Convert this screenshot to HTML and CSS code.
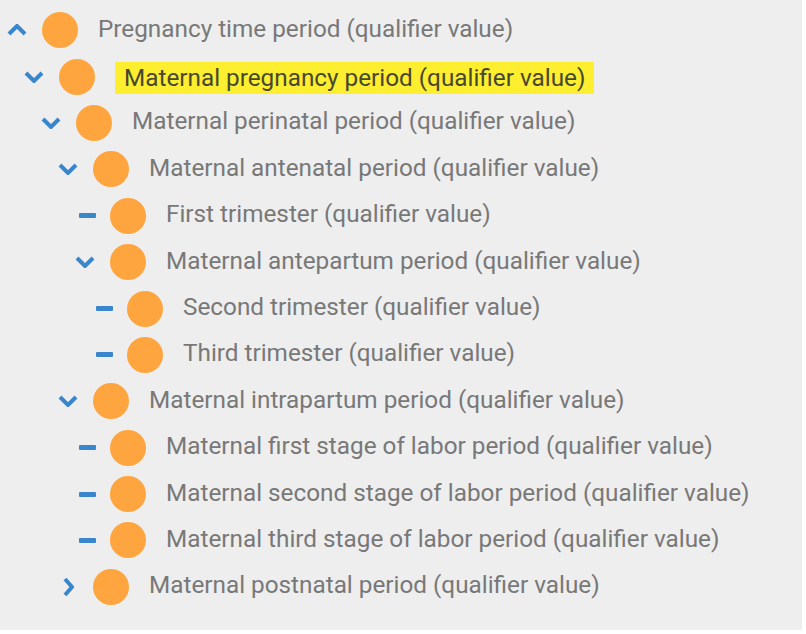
FILE: index.html
```html
<!DOCTYPE html>
<html>
<head>
  <title>Pregnancy time period</title>
  <link rel="stylesheet" href="styles.css">
</head>
<body>
  <div class="tree">
    <div class="node lvl-0">
      <span class="toggle"><svg width="20" height="12" viewBox="0 0 20 12"><polyline points="2,10 10,2 18,10" /></svg></span>
      <span class="dot"></span>
      <span class="label">Pregnancy time period (qualifier value)</span>
    </div>
    <div class="node lvl-1">
      <span class="toggle"><svg width="20" height="12" viewBox="0 0 20 12"><polyline points="2,2 10,10 18,2" /></svg></span>
      <span class="dot"></span>
      <span class="label selected">Maternal pregnancy period (qualifier value)</span>
    </div>
    <div class="node lvl-2">
      <span class="toggle"><svg width="20" height="12" viewBox="0 0 20 12"><polyline points="2,2 10,10 18,2" /></svg></span>
      <span class="dot"></span>
      <span class="label">Maternal perinatal period (qualifier value)</span>
    </div>
    <div class="node lvl-3">
      <span class="toggle"><svg width="20" height="12" viewBox="0 0 20 12"><polyline points="2,2 10,10 18,2" /></svg></span>
      <span class="dot"></span>
      <span class="label">Maternal antenatal period (qualifier value)</span>
    </div>
    <div class="node lvl-4">
      <span class="toggle"><span class="leaf"></span></span>
      <span class="dot"></span>
      <span class="label">First trimester (qualifier value)</span>
    </div>
    <div class="node lvl-4">
      <span class="toggle"><svg width="20" height="12" viewBox="0 0 20 12"><polyline points="2,2 10,10 18,2" /></svg></span>
      <span class="dot"></span>
      <span class="label">Maternal antepartum period (qualifier value)</span>
    </div>
    <div class="node lvl-5">
      <span class="toggle"><span class="leaf"></span></span>
      <span class="dot"></span>
      <span class="label">Second trimester (qualifier value)</span>
    </div>
    <div class="node lvl-5">
      <span class="toggle"><span class="leaf"></span></span>
      <span class="dot"></span>
      <span class="label">Third trimester (qualifier value)</span>
    </div>
    <div class="node lvl-3">
      <span class="toggle"><svg width="20" height="12" viewBox="0 0 20 12"><polyline points="2,2 10,10 18,2" /></svg></span>
      <span class="dot"></span>
      <span class="label">Maternal intrapartum period (qualifier value)</span>
    </div>
    <div class="node lvl-4">
      <span class="toggle"><span class="leaf"></span></span>
      <span class="dot"></span>
      <span class="label">Maternal first stage of labor period (qualifier value)</span>
    </div>
    <div class="node lvl-4">
      <span class="toggle"><span class="leaf"></span></span>
      <span class="dot"></span>
      <span class="label">Maternal second stage of labor period (qualifier value)</span>
    </div>
    <div class="node lvl-4">
      <span class="toggle"><span class="leaf"></span></span>
      <span class="dot"></span>
      <span class="label">Maternal third stage of labor period (qualifier value)</span>
    </div>
    <div class="node lvl-3">
      <span class="toggle"><svg width="12" height="20" viewBox="0 0 12 20"><polyline points="3,2 10,10 3,18" /></svg></span>
      <span class="dot"></span>
      <span class="label">Maternal postnatal period (qualifier value)</span>
    </div>
  </div>
</body>
</html>
```

FILE: styles.css
```css
body {
  margin: 0;
  padding: 0;
  background-color: #FFFFFF;
  font-family: Roboto, "Liberation Sans", sans-serif;
}

.tree {
  width: 802px;
  height: 630px;
  box-sizing: border-box;
  padding-top: 7px;
  background-color: #EEEEEE;
}

.node {
  display: flex;
  align-items: center;
  height: 46.4px;
}

.lvl-0 { padding-left: 6px; }
.lvl-1 { padding-left: 23px; }
.lvl-2 { padding-left: 40px; }
.lvl-3 { padding-left: 57px; }
.lvl-4 { padding-left: 74px; }
.lvl-5 { padding-left: 91px; }

.toggle {
  width: 22px;
  height: 22px;
  display: flex;
  align-items: center;
  justify-content: center;
}

.toggle svg polyline {
  fill: none;
  stroke: #3A86CC;
  stroke-width: 4;
}

.leaf {
  display: block;
  width: 19px;
  height: 5px;
  margin-left: 5px;
  border-radius: 1px;
  background-color: #3A86CC;
}

.dot {
  width: 36px;
  height: 36px;
  margin-left: 14px;
  border-radius: 50%;
  background-color: #FFA53F;
}

.label {
  margin-left: 20px;
  font-size: 24.3px;
  color: #787878;
  margin-top: -4px;
}

.label.selected {
  padding: 0 9px;
  line-height: 32px;
  margin-top: 2px;
  background-color: #FDEE30;
  color: #484830;
}
```
